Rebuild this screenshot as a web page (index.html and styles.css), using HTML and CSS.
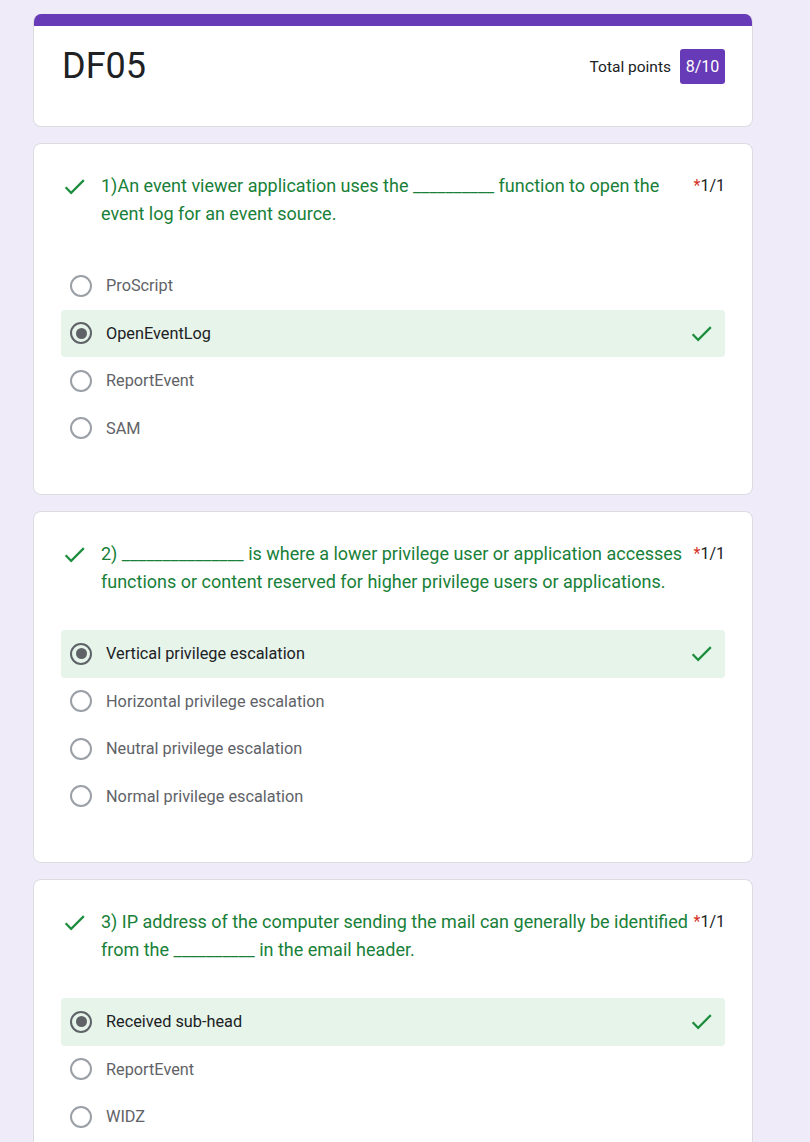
FILE: index.html
```html
<!DOCTYPE html>
<html lang="en">
<head>
<meta charset="utf-8">
<title>DF05</title>
<link rel="stylesheet" href="styles.css">
</head>
<body>
<div class="page">
  <section class="card header-card">
    <div class="accent"></div>
    <div class="header-body">
      <h1 class="title">DF05</h1>
      <div class="total">
        <span class="total-label">Total points</span>
        <span class="badge">8/10</span>
      </div>
    </div>
  </section>

  <section class="card question">
    <div class="q-head">
      <span class="q-check"><svg viewBox="0 0 24 24"><path d="M9 16.17L4.83 12l-1.42 1.41L9 19 21 7l-1.41-1.41z"/></svg></span>
      <p class="q-text">1)An event viewer application uses the __________ function to open the event log for an event source.</p>
      <span class="q-points"><span class="req">*</span>1/1</span>
    </div>
    <ul class="options">
      <li class="option"><span class="radio"></span><span class="opt-label">ProScript</span></li>
      <li class="option selected"><span class="radio"></span><span class="opt-label">OpenEventLog</span><span class="opt-check"><svg viewBox="0 0 24 24"><path d="M9 16.17L4.83 12l-1.42 1.41L9 19 21 7l-1.41-1.41z"/></svg></span></li>
      <li class="option"><span class="radio"></span><span class="opt-label">ReportEvent</span></li>
      <li class="option"><span class="radio"></span><span class="opt-label">SAM</span></li>
    </ul>
  </section>

  <section class="card question">
    <div class="q-head">
      <span class="q-check"><svg viewBox="0 0 24 24"><path d="M9 16.17L4.83 12l-1.42 1.41L9 19 21 7l-1.41-1.41z"/></svg></span>
      <p class="q-text">2) _______________ is where a lower privilege user or application accesses functions or content reserved for higher privilege users or applications.</p>
      <span class="q-points"><span class="req">*</span>1/1</span>
    </div>
    <ul class="options">
      <li class="option selected"><span class="radio"></span><span class="opt-label">Vertical privilege escalation</span><span class="opt-check"><svg viewBox="0 0 24 24"><path d="M9 16.17L4.83 12l-1.42 1.41L9 19 21 7l-1.41-1.41z"/></svg></span></li>
      <li class="option"><span class="radio"></span><span class="opt-label">Horizontal privilege escalation</span></li>
      <li class="option"><span class="radio"></span><span class="opt-label">Neutral privilege escalation</span></li>
      <li class="option"><span class="radio"></span><span class="opt-label">Normal privilege escalation</span></li>
    </ul>
  </section>

  <section class="card question">
    <div class="q-head">
      <span class="q-check"><svg viewBox="0 0 24 24"><path d="M9 16.17L4.83 12l-1.42 1.41L9 19 21 7l-1.41-1.41z"/></svg></span>
      <p class="q-text">3) IP address of the computer sending the mail can generally be identified from the __________ in the email header.</p>
      <span class="q-points"><span class="req">*</span>1/1</span>
    </div>
    <ul class="options">
      <li class="option selected"><span class="radio"></span><span class="opt-label">Received sub-head</span><span class="opt-check"><svg viewBox="0 0 24 24"><path d="M9 16.17L4.83 12l-1.42 1.41L9 19 21 7l-1.41-1.41z"/></svg></span></li>
      <li class="option"><span class="radio"></span><span class="opt-label">ReportEvent</span></li>
      <li class="option"><span class="radio"></span><span class="opt-label">WIDZ</span></li>
    </ul>
  </section>
</div>
</body>
</html>
```

FILE: styles.css
```css
html, body {
  margin: 0;
  padding: 0;
}
body {
  background: #f0ebf8;
  font-family: Roboto, "Liberation Sans", Arial, sans-serif;
  color: #202124;
}
.page {
  width: 720px;
  margin-left: 33px;
  padding-top: 14px;
  display: flex;
  flex-direction: column;
  gap: 16px;
}
.card {
  background: #fff;
  border: 1px solid #dadce0;
  border-radius: 8px;
  box-sizing: border-box;
}
.header-card {
  overflow: hidden;
  border-top: none;
}
.accent {
  height: 12px;
  background: #673ab7;
}
.header-body {
  display: flex;
  align-items: flex-start;
  justify-content: space-between;
  padding: 18px 27px 38px 28px;
}
.title {
  margin: 0;
  font-size: 36px;
  line-height: 44px;
  font-weight: 400;
  color: #202124;
}
.total {
  display: flex;
  align-items: center;
  gap: 9px;
  margin-top: 5px;
}
.total-label {
  font-size: 15.5px;
  color: #202124;
}
.badge {
  background: #673ab7;
  color: #fff;
  font-size: 16px;
  width: 45px;
  height: 35px;
  border-radius: 3px;
  display: flex;
  align-items: center;
  justify-content: center;
}
.question {
  padding: 28px 27px 42px 27px;
}
.q-head {
  display: flex;
  align-items: flex-start;
}
.q-check {
  width: 27px;
  height: 28px;
  flex: none;
  display: flex;
  align-items: center;
  justify-content: center;
  margin-right: 13px;
}
.q-check svg, .opt-check svg {
  width: 27px;
  height: 27px;
  fill: #1e8e3e;
}
.q-text {
  flex: 1;
  margin: 0;
  font-size: 18px;
  line-height: 28px;
  color: #188038;
}
.q-points {
  flex: none;
  margin-left: 4px;
  font-size: 16px;
  line-height: 28px;
  color: #202124;
}
.req {
  color: #d93025;
}
.options {
  list-style: none;
  margin: 34px 0 0 0;
  padding: 0;
}
.option {
  display: flex;
  align-items: center;
  height: 47.5px;
  padding-left: 9px;
  padding-right: 10px;
  border-radius: 4px;
}
.option.selected {
  background: #e6f4ea;
}
.radio {
  width: 22px;
  height: 22px;
  box-sizing: border-box;
  border: 2px solid #9aa0a6;
  border-radius: 50%;
  flex: none;
  margin-right: 14px;
  display: flex;
  align-items: center;
  justify-content: center;
}
.selected .radio {
  border-color: #5f6368;
}
.selected .radio::after {
  content: "";
  width: 11px;
  height: 11px;
  border-radius: 50%;
  background: #5f6368;
}
.opt-label {
  flex: 1;
  font-size: 16.3px;
  color: #5f6368;
}
.selected .opt-label {
  color: #202124;
}
.opt-check {
  flex: none;
  display: flex;
}
```
